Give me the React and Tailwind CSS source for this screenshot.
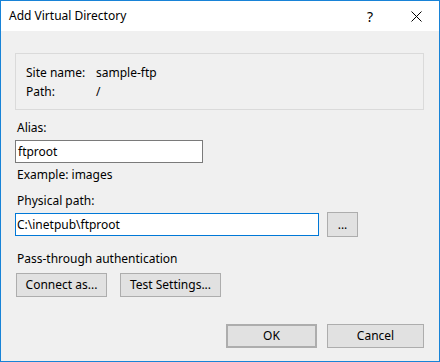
import React from 'react'

const Button = ({ children, className = '' }) => (
  <button
    className={`h-[24px] bg-[#e1e1e1] border border-[#adadad] text-[12px] text-black flex items-center justify-center ${className}`}
  >
    {children}
  </button>
)

export default function App() {
  return (
    <div
      className="w-[440px] h-[362px] border border-[#1883d7] flex flex-col bg-[#f0f0f0] text-[12px] text-black"
      style={{ fontFamily: '"Noto Sans", "Open Sans", sans-serif' }}
    >
      {/* Title bar */}
      <div className="h-[30px] bg-white flex items-center">
        <span className="ml-[8px] flex-1">Add Virtual Directory</span>
        <span className="w-[46px] text-center text-[14px]">?</span>
        <span className="w-[46px] flex items-center justify-center">
          <svg width="11" height="11" viewBox="0 0 11 11">
            <path d="M0.5 0.5 L10.5 10.5 M10.5 0.5 L0.5 10.5" stroke="#000" strokeWidth="1" />
          </svg>
        </span>
      </div>

      {/* Body */}
      <div className="flex-1 flex flex-col pl-[14px] pr-[15px] pt-[22px]">
        <div className="h-[57px] border border-[#dadada] pt-[9px] pl-[10px]">
          <div className="flex h-[19px] items-center">
            <span className="w-[70px]">Site name:</span>
            <span>sample-ftp</span>
          </div>
          <div className="flex h-[19px] items-center">
            <span className="w-[70px]">Path:</span>
            <span>/</span>
          </div>
        </div>

        <div className="mt-[10px] h-[16px] leading-[16px] pl-[2px]">Alias:</div>
        <div className="mt-[4px] w-[188px] h-[23px] bg-white border border-[#7a7a7a] flex items-center pl-[2px]">
          ftproot
        </div>
        <div className="mt-[4px] h-[16px] leading-[16px] pl-[2px]">Example: images</div>

        <div className="mt-[10px] h-[16px] leading-[16px] pl-[2px]">Physical path:</div>
        <div className="mt-[3px] flex items-center gap-[8px]">
          <div className="w-[304px] h-[23px] bg-white border border-[#0078d7] flex items-center pl-[1px]">
            C:\inetpub\ftproot
          </div>
          <Button className="w-[31px] h-[25px]">...</Button>
        </div>

        <div className="mt-[14px] h-[16px] leading-[16px] pl-[2px]">Pass-through authentication</div>
        <div className="mt-[6px] flex gap-[13px] pl-[1px]">
          <Button className="w-[91px]">Connect as...</Button>
          <Button className="w-[101px]">Test Settings...</Button>
        </div>

        <div className="mt-[27px] flex justify-end gap-[10px]">
          <Button className="w-[91px] border-2 border-[#0078d7]">OK</Button>
          <Button className="w-[97px]">Cancel</Button>
        </div>
      </div>
    </div>
  )
}
